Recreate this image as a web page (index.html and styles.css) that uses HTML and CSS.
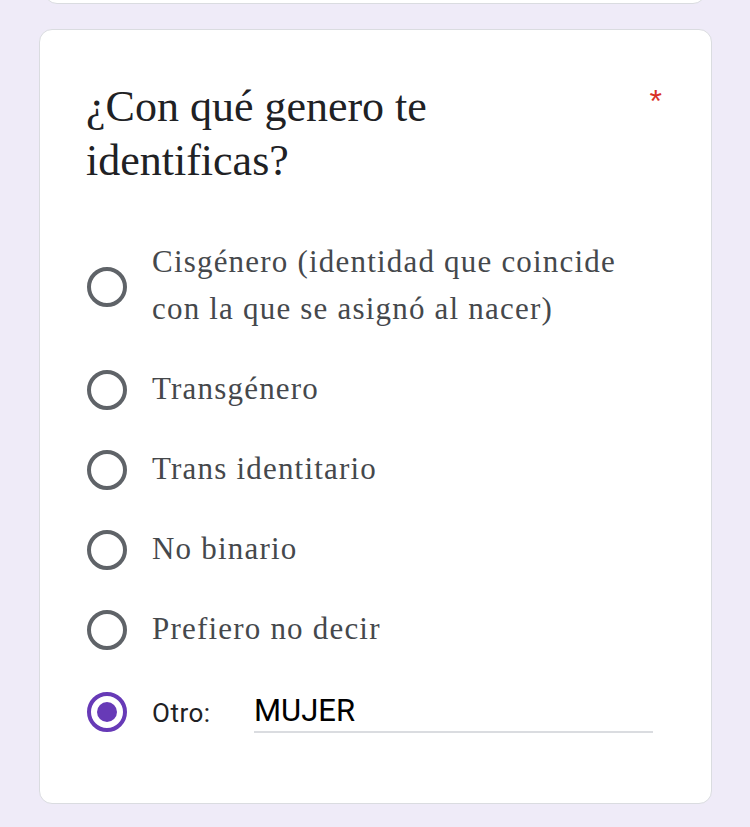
FILE: index.html
```html
<!DOCTYPE html>
<html lang="es">
<head>
    <meta charset="UTF-8">
    <meta name="viewport" content="width=device-width, initial-scale=1.0">
    <title>Formulario</title>
    <link rel="stylesheet" href="styles.css">
</head>
<body>
    <!-- tarjeta anterior (solo el borde inferior) -->
    <div class="card card-prev"></div>

    <!-- pregunta -->
    <div class="card question">
        <div class="question-head">
            <h2 class="question-title">¿Con qué genero te identificas?</h2>
            <span class="required">*</span>
        </div>

        <div class="options">
            <label class="option">
                <span class="radio"></span>
                <span class="option-text">Cisgénero (identidad que coincide con la que se asignó al nacer)</span>
            </label>
            <label class="option">
                <span class="radio"></span>
                <span class="option-text">Transgénero</span>
            </label>
            <label class="option">
                <span class="radio"></span>
                <span class="option-text">Trans identitario</span>
            </label>
            <label class="option">
                <span class="radio"></span>
                <span class="option-text">No binario</span>
            </label>
            <label class="option">
                <span class="radio"></span>
                <span class="option-text">Prefiero no decir</span>
            </label>
            <div class="option option-other">
                <span class="radio checked"></span>
                <span class="other-label">Otro:</span>
                <div class="other-input">MUJER</div>
            </div>
        </div>
    </div>
</body>
</html>
```

FILE: styles.css
```css
* {
    margin: 0;
    padding: 0;
    box-sizing: border-box;
}

body {
    background: #efebf8;
    font-family: 'Liberation Serif', serif;
    padding-bottom: 40px;
}

/* tarjetas */
.card {
    background: white;
    border: 1px solid #dadce0;
    border-radius: 13px;
}

.card-prev {
    height: 40px;
    margin: -36px 44px 0 44px;
}

.question {
    margin: 25px 38px 0 39px;
    padding: 50px 46px 70px 46px;
}

/* titulo */
.question-head {
    display: flex;
    justify-content: space-between;
    align-items: flex-start;
}

.question-title {
    width: 470px;
    font-size: 44px;
    font-weight: normal;
    line-height: 54px;
    color: #202124;
}

.required {
    color: #d93025;
    font-family: 'Liberation Sans', sans-serif;
    font-size: 32px;
    line-height: 30px;
    margin-top: 6px;
    margin-right: 3px;
}

/* opciones */
.options {
    display: flex;
    flex-direction: column;
    gap: 30px;
    margin-top: 50px;
}

.option {
    display: flex;
    align-items: center;
    gap: 25px;
}

.radio {
    flex-shrink: 0;
    width: 40px;
    height: 40px;
    margin-left: 1px;
    border: 4px solid #5f6368;
    border-radius: 50%;
    display: flex;
    align-items: center;
    justify-content: center;
}

.radio.checked {
    border-color: #673ab7;
}

.radio.checked::after {
    content: '';
    width: 20px;
    height: 20px;
    border-radius: 50%;
    background: #673ab7;
}

.option-text {
    max-width: 478px;
    padding-bottom: 3px;
    font-size: 31px;
    line-height: 47px;
    color: #45484c;
    letter-spacing: 1.2px;
}

/* otro */
.option-other {
    margin-top: 6px;
}

.other-label {
    font-family: Roboto, sans-serif;
    font-size: 26px;
    letter-spacing: 0.5px;
    color: #202124;
    width: 77px;
    padding-top: 2px;
}

.other-input {
    flex: 1;
    font-family: Roboto, sans-serif;
    font-size: 31px;
    color: #000;
    line-height: 40px;
    border-bottom: 2px solid #dadce0;
    margin-right: 12px;
}
```
